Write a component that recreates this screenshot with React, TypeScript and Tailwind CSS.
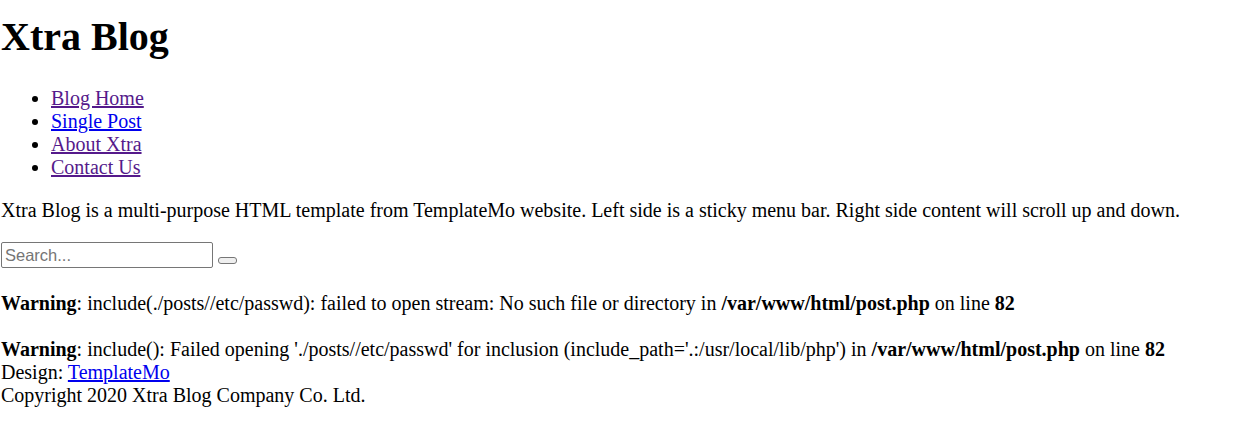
export default function App() {
  return (
    <div className="min-h-[434px] bg-white text-[20px] leading-[23px] text-black font-['Liberation_Serif',serif]">
      <h1 className="mt-[14px] mb-[27px] text-[40px] leading-[46px] font-bold pl-[1px]">Xtra Blog</h1>
      <ul className="list-disc pl-[51px]">
        <li>
          <a href="#" className="underline text-[#551a8b]">Blog Home</a>
        </li>
        <li>
          <a href="#" className="underline text-[#0000ee]">Single Post</a>
        </li>
        <li>
          <a href="#" className="underline text-[#551a8b]">About Xtra</a>
        </li>
        <li>
          <a href="#" className="underline text-[#551a8b]">Contact Us</a>
        </li>
      </ul>
      <p className="my-[20px] pl-[1px]">
        Xtra Blog is a multi-purpose HTML template from TemplateMo website. Left side is a sticky menu bar. Right side content will scroll up and down.
      </p>
      <form className="flex items-end gap-[5px] pl-[1px]">
        <input
          type="text"
          placeholder="Search..."
          className="h-[26px] w-[212px] rounded-[2px] border border-[#767676] px-[3px] text-[16.5px] font-['Liberation_Sans',sans-serif] placeholder:text-[#757575] outline-none"
        />
        <button
          type="button"
          className="mb-[4px] h-[7px] w-[19px] rounded-[3px] border border-[#767676] bg-[#efefef]"
        />
      </form>
      <div className="mt-[24px] pl-[1px]">
        <div>
          <b>Warning</b>: include(./posts//etc/passwd): failed to open stream: No such file or directory in{" "}
          <b>/var/www/html/post.php</b> on line <b>82</b>
        </div>
        <div className="h-[23px]" />
        <div>
          <b>Warning</b>: include(): Failed opening './posts//etc/passwd' for inclusion (include_path='.:/usr/local/lib/php') in{" "}
          <b>/var/www/html/post.php</b> on line <b>82</b>
        </div>
        <div>
          Design: <a href="#" className="underline text-[#0000ee]">TemplateMo</a>
        </div>
        <div>Copyright 2020 Xtra Blog Company Co. Ltd.</div>
      </div>
    </div>
  );
}
